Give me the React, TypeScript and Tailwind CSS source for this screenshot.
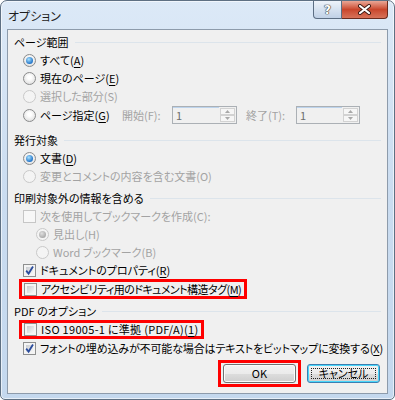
import React from "react";

// Windows 7 style "オプション" dialog

const DIS = "text-[#a3a3a3]";

function Key({ k }: { k: string }) {
    return (
        <>
            (<u className="underline underline-offset-[2px]">{k}</u>)
        </>
    );
}

function Radio({ checked, disabled }: { checked?: boolean; disabled?: boolean }) {
    return (
        <span
            className={`relative w-[13px] h-[13px] rounded-full border shrink-0 ${
                disabled
                    ? "border-[#c9c9c9] bg-[#f4f4f4]"
                    : "border-[#8a8b8c] bg-[radial-gradient(circle_at_50%_40%,#ffffff_20%,#d6d6d6)]"
            }`}
        >
            {checked && (
                <span
                    className={`absolute left-[2px] top-[2px] w-[7px] h-[7px] rounded-full ${
                        disabled
                            ? "bg-[radial-gradient(circle_at_40%_35%,#e0e0e0,#a8a8a8_75%)]"
                            : "bg-[radial-gradient(circle_at_40%_35%,#a8e2ff,#1a6dc4_75%)]"
                    }`}
                />
            )}
        </span>
    );
}

function Check({ checked, disabled }: { checked?: boolean; disabled?: boolean }) {
    return (
        <span
            className={`relative w-[13px] h-[13px] border shrink-0 ${
                disabled ? "border-[#c6c6c6] bg-[#f7f7f7]" : "border-[#8e8f8f] bg-[#f4f4f4]"
            }`}
        >
            {!disabled && (
                <span className="absolute inset-[2px] bg-gradient-to-br from-[#c9ccd1] to-[#f7f7f7]" />
            )}
            {checked && (
                <svg className="absolute left-0 top-0" width="11" height="11" viewBox="0 0 11 11">
                    <path d="M2.2 5.6 L4.6 8.6 L9 1.6" fill="none" stroke="#2b4c9c" strokeWidth="1.8" />
                </svg>
            )}
        </span>
    );
}

function Arrow({ up }: { up?: boolean }) {
    return (
        <svg width="5" height="3" viewBox="0 0 5 3">
            <polygon points={up ? "0,3 5,3 2.5,0" : "0,0 5,0 2.5,3"} fill="#a8a8a8" />
        </svg>
    );
}

function Spin({ w }: { w: string }) {
    return (
        <div className={`flex h-[18px] border border-[#abb0b5] bg-[#f0f0f0] ${w}`}>
            <div className="flex-1 border-t border-[#bcd3ec] pl-[3px] text-[#6d6d6d] leading-[15px]">1</div>
            <div className="w-[17px] flex flex-col p-px">
                <div className="flex-1 border border-[#d2d2d2] bg-[#f6f6f6] flex items-center justify-center">
                    <Arrow up />
                </div>
                <div className="flex-1 border border-[#d2d2d2] bg-[#f6f6f6] flex items-center justify-center">
                    <Arrow />
                </div>
            </div>
        </div>
    );
}

function Group({ title, className = "" }: { title: string; className?: string }) {
    return (
        <div className={`flex items-center h-[18px] pl-[6px] pr-[6px] ${className}`}>
            <span>{title}</span>
            <div className="flex-1 h-px bg-[#dce4eb] ml-[6px]" />
        </div>
    );
}

function Row({ children, indent = "pl-[15px]", disabled }: { children: React.ReactNode; indent?: string; disabled?: boolean }) {
    return (
        <div className={`flex items-center gap-[4px] h-[18px] whitespace-nowrap ${indent} ${disabled ? DIS : ""}`}>{children}</div>
    );
}

export default function App() {
    return (
        <div className="w-[395px] h-[400px] flex flex-col border border-[#5e7083] rounded-t-[7px] rounded-b-[5px] bg-gradient-to-b from-[#dce9f7] via-[#cadcf0] to-[#c4d8ee] shadow-[inset_0_0_0_1px_rgba(255,255,255,0.6)] text-[11px] text-black font-['Noto_Sans_CJK_JP',sans-serif] [font-feature-settings:'palt'] overflow-hidden">
            {/* title bar */}
            <div className="flex h-[28px] shrink-0">
                <span className="self-center pl-[7px] pt-[1px] text-[12px] text-[#1e1e1e]">オプション</span>
                <div className="ml-auto mr-[6px] flex self-start">
                    <div className="w-[29px] h-[18px] border border-[#5c6e83] border-t-0 rounded-bl-[4px] bg-gradient-to-b from-[#eef3fa] via-[#d6e2f0] to-[#c0d1e6] flex items-center justify-center">
                        <span className="text-white font-bold text-[12px] leading-none [text-shadow:0_0_1px_#333,0_0_1px_#333,0_0_1px_#333] font-['DejaVu_Sans',sans-serif]">?</span>
                    </div>
                    <div className="w-[46px] h-[18px] border border-[#6b2b1e] border-l-0 border-t-0 rounded-br-[4px] bg-gradient-to-b from-[#e9a696] via-[#c9462c] to-[#d77259] flex items-center justify-center">
                        <svg width="15" height="11" viewBox="0 0 15 11">
                            <path d="M3 2 L12 9 M12 2 L3 9" stroke="#3b1a14" strokeWidth="4" strokeLinecap="round" />
                            <path d="M3 2 L12 9 M12 2 L3 9" stroke="#ffffff" strokeWidth="2.2" strokeLinecap="round" />
                        </svg>
                    </div>
                </div>
            </div>

            {/* client area */}
            <div className="mx-[6px] h-[365px] border border-[#8d9bab] bg-[#f0f0f0] flex flex-col pt-[3px]">
                <Group title="ページ範囲" />
                <Row>
                    <Radio checked />
                    <span>すべて<Key k="A" /></span>
                </Row>
                <Row>
                    <Radio />
                    <span>現在のページ<Key k="E" /></span>
                </Row>
                <Row disabled>
                    <Radio disabled />
                    <span>選択した部分(S)</span>
                </Row>
                <div className="flex items-center h-[20px] pl-[15px] whitespace-nowrap">
                    <Radio />
                    <span className="ml-[4px] w-[82px]">ページ指定<Key k="G" /></span>
                    <span className={`w-[50px] ${DIS}`}>開始(F):</span>
                    <Spin w="w-[65px]" />
                    <span className={`ml-[9px] w-[50px] ${DIS}`}>終了(T):</span>
                    <Spin w="w-[64px]" />
                </div>

                <Group title="発行対象" className="mt-[6px]" />
                <Row>
                    <Radio checked />
                    <span>文書<Key k="D" /></span>
                </Row>
                <Row disabled>
                    <Radio disabled />
                    <span>変更とコメントの内容を含む文書(O)</span>
                </Row>

                <Group title="印刷対象外の情報を含める" className="mt-[4px]" />
                <Row disabled>
                    <Check disabled />
                    <span>次を使用してブックマークを作成(C):</span>
                </Row>
                <Row disabled indent="pl-[28px]">
                    <Radio checked disabled />
                    <span>見出し(H)</span>
                </Row>
                <Row disabled indent="pl-[28px]">
                    <Radio disabled />
                    <span>Word ブックマーク(B)</span>
                </Row>
                <Row>
                    <Check checked />
                    <span>ドキュメントのプロパティ<Key k="R" /></span>
                </Row>
                <div className="ml-[11px] h-[20px] self-start inline-flex items-center gap-[4px] border-[3px] border-[#ff0000] pl-[2px] pr-[3px] whitespace-nowrap">
                    <Check />
                    <span className="tracking-[-0.55px]">アクセシビリティ用のドキュメント構造タグ<Key k="M" /></span>
                </div>

                <Group title="PDF のオプション" className="mt-[3px]" />
                <div className="ml-[11px] h-[19px] self-start inline-flex items-center gap-[4px] border-[3px] border-[#ff0000] pl-[2px] pr-[3px] whitespace-nowrap">
                    <Check />
                    <span className="tracking-[0.3px]">ISO 19005-1 に準拠 (PDF/A)<Key k="1" /></span>
                </div>
                <Row>
                    <Check checked />
                    <span className="tracking-[-0.15px]">フォントの埋め込みが不可能な場合はテキストをビットマップに変換する<Key k="X" /></span>
                </Row>

                <div className="flex justify-end items-center gap-[6px] pr-[7px] mt-[3px]">
                    <div className="border-[3px] border-[#ff0000] px-[2px] py-px">
                        <button className="w-[73px] h-[19px] rounded-[3px] border border-[#707070] bg-[linear-gradient(#f2f2f2_0%,#ebebeb_50%,#dddddd_50%,#cfcfcf_100%)] shadow-[inset_0_0_0_1px_#fbfbfb] leading-none">
                            OK
                        </button>
                    </div>
                    <button className="relative w-[73px] h-[19px] rounded-[3px] border border-[#3c7fb1] bg-[linear-gradient(#f2f2f2_0%,#ebebeb_50%,#dddddd_50%,#cfcfcf_100%)] shadow-[inset_0_0_0_1px_#48d7fb] leading-none">
                        <span className="absolute inset-[3px] border border-dotted border-[#222]" />
                        キャンセル
                    </button>
                </div>
            </div>
        </div>
    );
}
